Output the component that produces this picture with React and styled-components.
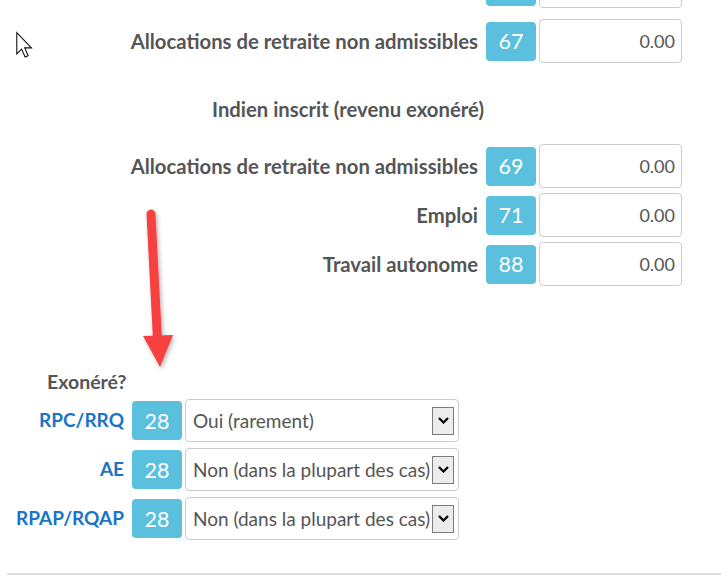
import React from 'react';
import styled, { createGlobalStyle } from 'styled-components';

const GlobalStyle = createGlobalStyle`
  * { box-sizing: border-box; }
  body {
    margin: 0;
    background: #fff;
    font-family: Lato, "Open Sans", sans-serif;
  }
`;

const Page = styled.div`
  position: relative;
  width: 721px;
  height: 580px;
  overflow: hidden;
  background: #fff;
`;

const Form = styled.div`
  display: flex;
  flex-direction: column;
  margin-top: -36px;
`;

const Group = styled.div`
  display: flex;
  flex-direction: column;
  gap: ${p => p.$gap}px;
  margin-top: ${p => p.$mt || 0}px;
`;

const Row = styled.div`
  display: flex;
  align-items: center;
  height: ${p => p.$h}px;
  margin-top: ${p => p.$mt || 0}px;
`;

const Label = styled.div`
  width: ${p => p.$w}px;
  padding-right: 8px;
  padding-bottom: ${p => (p.$blue ? 3 : 0)}px;
  text-align: right;
  white-space: nowrap;
  font-size: ${p => (p.$blue ? 19 : 20.3)}px;
  font-weight: 700;
  color: ${p => (p.$blue ? '#1b74c5' : '#555')};
`;

const Badge = styled.div`
  width: 50px;
  height: 39px;
  border-radius: 4px;
  background: #5bc0de;
  color: #fff;
  font-size: 21.5px;
  display: flex;
  align-items: center;
  justify-content: center;
`;

const AmountBox = styled.div`
  width: 143px;
  height: 44px;
  margin-left: 3px;
  border: 1px solid #ccc;
  border-radius: 4px;
  padding-right: 6px;
  display: flex;
  align-items: center;
  justify-content: flex-end;
  font-size: 18px;
  color: #555;
`;

const Heading = styled.div`
  width: 696px;
  margin-top: ${p => p.$mt}px;
  line-height: 24px;
  text-align: center;
  font-size: 20.3px;
  font-weight: 700;
  color: #555;
`;

const SectionTitle = styled.div`
  margin-top: ${p => p.$mt}px;
  padding-left: 47px;
  line-height: 20px;
  font-size: 19.5px;
  font-weight: 700;
  color: #555;
`;

const SelectBox = styled.div`
  width: 274px;
  height: 43px;
  margin-left: 3px;
  border: 1px solid #ccc;
  border-radius: 4px;
  padding: 0 4px 0 7px;
  display: flex;
  align-items: center;
  font-size: 19px;
  color: #555;
`;

const SelectText = styled.span`
  flex: 1;
  white-space: nowrap;
  overflow: hidden;
`;

const DropButton = styled.div`
  width: 22px;
  height: 28px;
  border: 1px solid #7c7c7c;
  background: #ececec;
  display: flex;
  align-items: center;
  justify-content: center;
`;

const Rule = styled.div`
  margin: ${p => p.$mt}px 0 0 7px;
  height: 2px;
  background: #dedede;
`;

const Overlay = styled.svg`
  position: absolute;
  left: ${p => p.$x}px;
  top: ${p => p.$y}px;
  overflow: visible;
  pointer-events: none;
`;

const AmountRow = ({ label, code, value = '0.00', mt }) => (
  <Row $h={44} $mt={mt}>
    <Label $w={486}>{label}</Label>
    <Badge>{code}</Badge>
    <AmountBox>{value}</AmountBox>
  </Row>
);

const ExemptRow = ({ label, value }) => (
  <Row $h={43}>
    <Label $w={132} $blue>{label}</Label>
    <Badge>28</Badge>
    <SelectBox>
      <SelectText>{value}</SelectText>
      <DropButton>
        <svg width="11" height="7" viewBox="0 0 11 7">
          <path d="M1 1 L5.5 5.5 L10 1" fill="none" stroke="#000" strokeWidth="2.2" />
        </svg>
      </DropButton>
    </SelectBox>
  </Row>
);

export default function App() {
  return (
    <Page>
      <GlobalStyle />
      <Form>
        <AmountRow label="" code="" value="" />
        <AmountRow label="Allocations de retraite non admissibles" code="67" mt={11} />

        <Heading $mt={34}>Indien inscrit (revenu exonéré)</Heading>

        <Group $gap={5} $mt={23}>
          <AmountRow label="Allocations de retraite non admissibles" code="69" />
          <AmountRow label="Emploi" code="71" />
          <AmountRow label="Travail autonome" code="88" />
        </Group>

        <SectionTitle $mt={86}>Exonéré?</SectionTitle>

        <Group $gap={6} $mt={7}>
          <ExemptRow label="RPC/RRQ" value="Oui (rarement)" />
          <ExemptRow label="AE" value="Non (dans la plupart des cas)" />
          <ExemptRow label="RPAP/RQAP" value="Non (dans la plupart des cas)" />
        </Group>

        <Rule $mt={33} />
      </Form>

      {/* mouse pointer */}
      <Overlay $x={16} $y={32} width="18" height="26" viewBox="0 0 13 19">
        <path
          d="M0.5 0.5 L0.5 16 L4 12.5 L6.6 18.3 L8.8 17.3 L6.3 11.6 L11.2 11.6 Z"
          fill="#fff"
          stroke="#111"
          strokeWidth="0.8"
          strokeLinejoin="miter"
        />
      </Overlay>

      {/* red annotation arrow */}
      <Overlay $x={0} $y={0} width="721" height="580">
        <defs>
          <filter id="arrowShadow" x="-50%" y="-10%" width="200%" height="130%">
            <feDropShadow dx="1.5" dy="2" stdDeviation="2" floodColor="#000" floodOpacity="0.3" />
          </filter>
        </defs>
        <g filter="url(#arrowShadow)">
          <line x1="151" y1="214" x2="157.5" y2="340" stroke="#f7403f" strokeWidth="9" strokeLinecap="round" />
          <polygon points="143,336 173,335 160,367" fill="#f7403f" />
        </g>
      </Overlay>
    </Page>
  );
}
